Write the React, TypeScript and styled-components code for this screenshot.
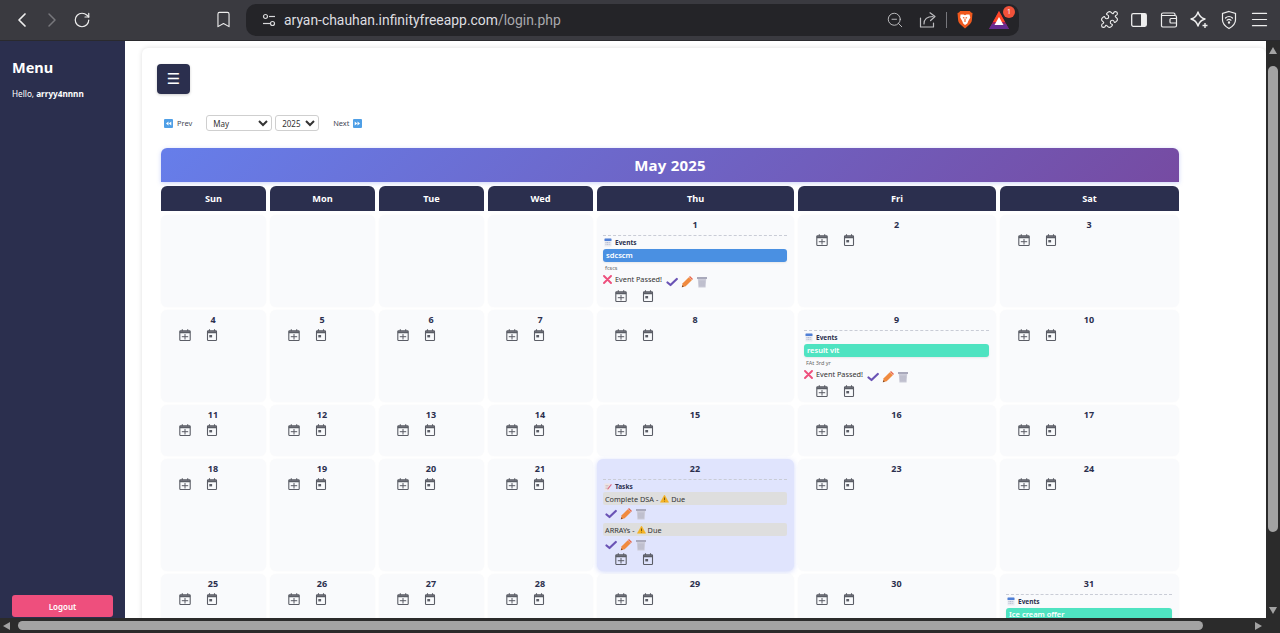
import React from "react";
import styled, { createGlobalStyle } from "styled-components";
import { ChevronLeft, ChevronRight, RotateCw, Bookmark, ZoomOut, Puzzle, Wallet, Menu as MenuIcon } from "lucide-react";

const Global = createGlobalStyle`
  html, body { margin: 0; padding: 0; height: 100%; overflow: hidden; background: #2b2b2b; }
  #root { height: 100%; }
  * { box-sizing: border-box; }
`;

const navy = "#2b2f4e";

const Shell = styled.div`
  width: 1280px; height: 633px; display: flex; flex-direction: column; overflow: hidden;
  font-family: "Noto Sans", "Open Sans", sans-serif;
`;
const Toolbar = styled.header`
  height: 41px; flex: none; background: #3a3a40; display: flex; align-items: center; padding: 0 6px 1px 7px;
  border-bottom: 1px solid #2a2a2e;
`;
const ToolButton = styled.div<{ $dim?: boolean; $w?: number; $ml?: number }>`
  width: ${p => p.$w ?? 30}px; height: 30px; flex: none; display: flex; align-items: center; justify-content: center;
  margin-left: ${p => p.$ml ?? 0}px;
  color: ${p => (p.$dim ? "#77777c" : "#eeeeee")};
`;
const BookmarkSlot = styled(ToolButton)`margin-left: 111px;`;
const UrlBar = styled.div`
  width: 773px; height: 32px; margin-left: 8px; flex: none; background: #242428; border-radius: 10px;
  display: flex; align-items: center; padding: 0 2px 0 15px; color: #d8d8da; position: relative;
`;
const SiteIcon = styled.div`width: 16px; height: 16px; flex: none; display: flex;`;
const UrlText = styled.div`
  margin-left: 7px; font-family: Roboto, "Noto Sans", sans-serif; font-size: 13.9px; color: #dedee0; white-space: nowrap;
`;
const UrlPath = styled.span`color: #a9a9ad;`;
const UrlEnd = styled.div`margin-left: auto; display: flex; align-items: center; color: #cfcfd2;`;
const UrlDivider = styled.div`width: 1px; height: 16px; background: #77777c; margin: 0 10px 0 9px;`;
const BatSlot = styled.div`width: 24px; height: 24px; margin-left: 14px; margin-right: 6px; position: relative; display: flex; align-items: center; justify-content: center;`;
const BatBadge = styled.span`
  position: absolute; top: -2px; right: -4px; width: 12px; height: 12px; border-radius: 50%; background: #f1523a; color: #fff;
  font-size: 7px; line-height: 12px; text-align: center;
`;
const RightTools = styled.div`display: flex; margin-left: 75px;`;

const Middle = styled.div`flex: 1; min-height: 0; display: flex;`;
const Viewport = styled.div`flex: 1; min-width: 0; display: flex; background: #fff; overflow: hidden;`;
const VTrack = styled.div`
  width: 14px; flex: none; background: #2b2b2b; display: flex; flex-direction: column; align-items: center;
`;
const ArrowUp = styled.div`
  margin-top: 6px; width: 0; height: 0; border-left: 4.5px solid transparent; border-right: 4.5px solid transparent; border-bottom: 7px solid #a3a3a3;
`;
const VThumb = styled.div`
  margin-top: 12px; width: 10px; height: 466px; background: #a3a3a3; border-radius: 5px;
`;
const ArrowDown = styled.div`
  margin-top: auto; margin-bottom: 4px; width: 0; height: 0; border-left: 4.5px solid transparent; border-right: 4.5px solid transparent; border-top: 7px solid #a3a3a3;
`;
const HTrack = styled.div`
  height: 15px; flex: none; background: #2b2b2b; display: flex; align-items: center; padding: 0 0 0 3px;
`;
const ArrowLeft = styled.div`
  width: 0; height: 0; border-top: 4.5px solid transparent; border-bottom: 4.5px solid transparent; border-right: 7px solid #a3a3a3;
`;
const HThumb = styled.div`margin-left: 8px; width: 1185px; height: 9px; background: #a3a3a3; border-radius: 5px;`;
const ArrowRight = styled.div`
  margin-left: 52px; width: 0; height: 0; border-top: 4.5px solid transparent; border-bottom: 4.5px solid transparent; border-left: 7px solid #a3a3a3;
`;

const Sidebar = styled.aside`
  width: 125px; flex: none; background: ${navy}; color: #fff; display: flex; flex-direction: column; padding: 16px 12px 1px;
`;
const SideTitle = styled.h2`margin: 0; font-size: 14.5px; line-height: 20px; font-weight: 700;`;
const Hello = styled.p`margin: 11px 0 0; font-size: 8.2px; line-height: 12px; strong { font-weight: 700; }`;
const Logout = styled.button`
  margin-top: auto; width: 101px; height: 22px; border: 0; border-radius: 3px; background: #ee4f7d; color: #fff;
  font: 600 8px "Noto Sans", sans-serif; padding: 0;
`;

const Content = styled.main`flex: 1; min-width: 0; padding: 7px 0 0 17px; overflow: hidden;`;
const Card = styled.section`
  background: #fff; border-radius: 6px; box-shadow: 0 0 5px rgba(0,0,0,0.13); padding: 16px 0 0 15px; height: 700px;
`;
const Hamburger = styled.button`
  display: block; width: 33px; height: 30px; border: 0; border-radius: 4px; background: ${navy}; color: #fff; font-size: 15px; padding: 0;
  font-family: "DejaVu Sans", sans-serif; box-shadow: 0 1px 3px rgba(0,0,0,.2);
`;
const MonthNav = styled.nav`
  display: flex; align-items: center; height: 16px; margin-top: 21px; font-size: 7.4px; color: #444756; padding-left: 7px;
`;
const NavLink = styled.span<{ $ml?: number }>`display: flex; align-items: center; gap: 4px; margin-left: ${p => p.$ml ?? 0}px;`;
const Select = styled.select<{ $w: number; $ml: number }>`
  width: ${p => p.$w}px; height: 16px; margin-left: ${p => p.$ml}px; border: 1px solid #cfcfcf; border-radius: 3px; background-color: #fff; color: #333;
  font: 8px "Noto Sans", sans-serif; padding: 0 0 0 2px;
`;
const Calendar = styled.div`width: 1018px; margin: 17px 0 0 4px;`;
const Banner = styled.div`
  height: 34px; border-radius: 6px 6px 0 0; background: linear-gradient(135deg, #667eea, #764ba2); color: #fff;
  display: flex; align-items: center; justify-content: center; font-size: 15px; font-weight: 700; box-shadow: 0 1px 4px rgba(102,126,234,.35); letter-spacing: .2px;
`;
const Grid = styled.div`
  margin-top: 4px; display: grid; grid-template-columns: 105px 105px 105px 105px 197px 198px 179px; column-gap: 4px; row-gap: 3px; align-items: stretch;
`;
const HeadCell = styled.div`
  height: 25px; margin-bottom: 1px; background: ${navy}; border-radius: 6px 6px 0 0; color: #fff; font-size: 9.2px; font-weight: 700;
  display: flex; align-items: center; justify-content: center;
`;
const Cell = styled.div<{ $today?: boolean }>`
  min-height: 51px; border-radius: 6px; background: ${p => (p.$today ? "#e0e4fd" : "#f9fafc")};
  padding: 4px 7px ${p => (p.$today ? 6 : 5)}px 6px;
  box-shadow: ${p => (p.$today ? "0 1px 5px rgba(102,126,234,.3)" : "0 0 2px rgba(0,0,0,.03)")};
  display: flex; flex-direction: column;
`;
const DayNum = styled.div`height: 12px; line-height: 12px; margin-bottom: 3px; text-align: center; font-size: 9px; font-weight: 700; color: ${navy};`;
const Section = styled.div`border-top: 1px dashed #c9ccd6; margin-top: 1px; padding-top: 1px;`;
const SectionLabel = styled.div`
  height: 10px; display: flex; align-items: center; gap: 3px; font-size: 6.5px; font-weight: 700; color: ${navy}; padding-left: 1px;
`;
const EventBar = styled.div<{ $color: string }>`
  margin-top: 2px; height: 13px; border-radius: 3px; background: ${p => p.$color}; color: #fff; font-size: 7.5px; font-weight: 600;
  line-height: 13px; padding-left: 3px; box-shadow: 0 1px 2px rgba(0,0,0,.08); white-space: nowrap; overflow: hidden;
`;
const Note = styled.div`margin-top: 2px; height: 9px; line-height: 9px; font-size: 5.5px; color: #666; padding-left: 2px;`;
const Passed = styled.div`height: 12px; margin-top: 1px; display: flex; align-items: center; font-size: 7.3px; color: #333; white-space: nowrap;`;
const PassedText = styled.span`margin: 0 4px 3px 3px;`;
const CrossSlot = styled.span`display: block; margin-bottom: 2px;`;
const Actions = styled.div`display: flex; gap: 3px; align-items: center; height: 12px;`;
const InlineActions = styled(Actions)`margin-top: 3px;`;
const TaskActions = styled(Actions)`margin: 3px 0 0 2px;`;
const TaskRow = styled.div`
  margin-top: 1px; height: 13px; background: #dedede; border-radius: 2px; font-size: 7.3px; color: #333; display: flex; align-items: center; gap: 2px;
  padding-left: 2px; white-space: nowrap;
  & ~ & { margin-top: 3px; }
`;
const Quick = styled.div<{ $tight?: boolean }>`
  display: flex; gap: 15px; height: 12px; margin-left: 12px; margin-top: ${p => (p.$tight ? 2 : 0)}px;
`;
const QuickAfterEvent = styled(Quick)`margin-top: 4px;`;

/* ---- drawings ---- */
const Svg = styled.svg`flex: none; display: block;`;
const SiteSvg = () => (
  <Svg width="16" height="16" viewBox="0 0 16 16" fill="none" stroke="#d8d8da" strokeWidth="1.2">
    <circle cx="4.5" cy="4.5" r="2" /><path d="M8 4.5h6" /><circle cx="11.5" cy="11.5" r="2" /><path d="M2 11.5h7" />
  </Svg>
);
const ShareSvg = () => (
  <Svg width="18" height="18" viewBox="0 0 18 18" fill="none" stroke="#bdbdc0" strokeWidth="1.2" strokeLinecap="round" strokeLinejoin="round">
    <path d="M1.5 7v9h13v-4" /><path d="M5 13c0-5 3-7.5 9-7.5" /><path d="M11 1.8l5 3.7-4.4 4" />
  </Svg>
);
const BraveSvg = () => (
  <Svg width="16" height="19" viewBox="0 0 16 19">
    <path d="M3.2 1h9.6l1.2 1.5 1.5.6-.6 7c-.3 2.2-1 3.3-2.4 4.4L8 18.5l-4.5-4C2.1 13.400 1.400 12.300 1.100 10.100L.5 3.100 2 2.500z" fill="#f0591e" />
    <path d="M3.500 4.500h3l1.500.7 1.500-.7h3l.8 3-2 3.500-1 2.500L8 15l-1.800-1.500-1-2.500-2-3.500z" fill="#fff" />
    <path d="M6 7.500l1.500.8M10 7.500l-1.500.8M8 9v3" stroke="#f0591e" strokeWidth="1.100" />
  </Svg>
);
const BatSvg = () => (
  <Svg width="22" height="20" viewBox="0 0 22 20">
    <path d="M11 1L1 19h20z" fill="#9e1f63" />
    <path d="M1 19h20l-3-5H4z" fill="#662d91" />
    <path d="M11 1l6 11H5z" fill="#ff4724" />
    <path d="M11 7l4.500 8h-9z" fill="#fff" />
  </Svg>
);
const PanelSvg = () => (
  <Svg width="18" height="18" viewBox="0 0 18 18">
    <rect x="1.700" y="2.700" width="14.600" height="12.600" rx="1.500" fill="none" stroke="#eee" strokeWidth="1.300" />
    <rect x="11" y="3" width="5" height="12" fill="#eee" />
  </Svg>
);
const WalletSvg = () => (
  <Svg width="18" height="18" viewBox="0 0 18 18" fill="none" stroke="#eee" strokeWidth="1.200" strokeLinejoin="round">
    <path d="M15 4V3.500A1.500 1.500 0 0 0 13.500 2H3a1.500 1.500 0 0 0-1.500 1.500V15A1.500 1.500 0 0 0 3 16h12a1.500 1.500 0 0 0 1.500-1.500V12" />
    <path d="M1.500 4.500H15a1.500 1.500 0 0 1 1.500 1.500v1.500" />
    <path d="M16.500 7.500H11a1 1 0 0 0-1 1V11a1 1 0 0 0 1 1h5.500z" />
  </Svg>
);
const SparkSvg = () => (
  <Svg width="20" height="20" viewBox="0 0 20 20" fill="none" stroke="#eee" strokeWidth="1.400" strokeLinejoin="round">
    <path d="M9 2c1 3.500 3 6 7 7-4 1-6 3.500-7 7-1-3.500-3-6-7-7 4-1 6-3.500 7-7z" />
    <path d="M16 13v5M13.500 15.500h5" />
  </Svg>
);
const ShieldSvg = () => (
  <Svg width="18" height="20" viewBox="0 0 18 20" fill="none" stroke="#eee" strokeWidth="1.200" strokeLinecap="round">
    <path d="M9 1.500l6.500 2V10c0 4-3 6.500-6.500 8.500C5.500 16.500 2.500 14 2.500 10V3.500z" />
    <path d="M5.500 8c2-1.800 5-1.800 7 0M7 10.200c1.200-1 2.800-1 4 0" /><circle cx="9" cy="12.500" r=".6" fill="#eee" />
  </Svg>
);

const CalPlus = () => (
  <Svg width="12" height="12" viewBox="0 0 12 12" fill="none" stroke="#5b5d66">
    <rect x=".8" y="1.800" width="10.400" height="9.700" rx=".8" strokeWidth="1.100" />
    <path d="M1 2.300h10V4H1z" fill="#5b5d66" strokeWidth=".5" />
    <path d="M3.300 .3V2.300M8.700 .3V2.300" strokeWidth="1.100" />
    <path d="M6 5v5.500M2.800 7.700h6.400" strokeWidth="1" />
  </Svg>
);
const CalDot = () => (
  <Svg width="12" height="12" viewBox="0 0 12 12" fill="none" stroke="#5b5d66">
    <rect x="1.500" y="1.800" width="9" height="9.700" rx=".8" strokeWidth="1.100" />
    <path d="M1.500 2.300h9V4h-9z" fill="#5b5d66" strokeWidth=".5" />
    <path d="M3.500 .3V2.300M8.500 .3V2.300" strokeWidth="1.100" />
    <rect x="3.300" y="6" width="2.800" height="2.400" fill="#5b5d66" stroke="none" />
  </Svg>
);
const EmojiCal = () => (
  <Svg width="8" height="9" viewBox="0 0 8 9">
    <rect x=".5" y=".5" width="7" height="8" rx=".6" fill="#e8eaf2" />
    <rect x=".5" y=".5" width="7" height="2.600" rx=".6" fill="#4f7fd6" />
    <path d="M1.500 4.500h5M1.500 6.300h5" stroke="#9aa3bd" strokeWidth=".7" strokeDasharray="1 .6" />
  </Svg>
);
const Memo = () => (
  <Svg width="8" height="9" viewBox="0 0 8 9">
    <rect x=".5" y="1.500" width="5.500" height="7" fill="#eee4e4" />
    <path d="M1.500 3.500h3M1.500 5h3M1.500 6.500h2" stroke="#b9a9ad" strokeWidth=".5" />
    <path d="M3.500 6.500L7 2l.8.7-3.500 4.500-1 .3z" fill="#d9657f" />
  </Svg>
);
const Skip = ({ dir }: { dir: "l" | "r" }) => (
  <Svg width="9" height="9" viewBox="0 0 9 9">
    <rect width="9" height="9" rx="1" fill="#4f9fe6" />
    <path d={dir === "l" ? "M4.500 2.500v4L2 4.500zM7.300 2.500v4L4.800 4.500z" : "M1.700 2.500v4l2.500-2zM4.500 2.500v4l2.500-2z"} fill="#fff" />
  </Svg>
);
const Cross = () => (
  <Svg width="9" height="9" viewBox="0 0 9 9"><path d="M1 1l7 7M8 1L1 8" stroke="#ee4f7d" strokeWidth="1.900" strokeLinecap="round" /></Svg>
);
const Check = () => (
  <Svg width="12" height="12" viewBox="0 0 12 12"><path d="M1.500 6.500L4.500 9 10.800 3" fill="none" stroke="#6a53b5" strokeWidth="2.200" strokeLinejoin="round" strokeLinecap="round" /></Svg>
);
const Pencil = () => (
  <Svg width="12" height="12" viewBox="0 0 12 12">
    <path d="M.8 11.200l.9-3.900L7.800 1.200l3 3-6.100 6.100z" fill="#f08a3f" />
    <path d="M8 1l1-1 3 3-1 1z" fill="#e8674a" />
    <path d="M.8 11.200l.5-2 1.500 1.500z" fill="#7a4a2a" />
  </Svg>
);
const Trash = () => (
  <Svg width="12" height="12" viewBox="0 0 12 12">
    <rect x="1" y="1" width="10" height="2" fill="#a9a9bb" />
    <path d="M1.800 3h8.400l-.6 8.500H2.400z" fill="#cbcbd8" />
    <path d="M4 4.500v6M6 4.500v6M8 4.500v6" stroke="#aeaec0" strokeWidth=".8" />
  </Svg>
);
const Warn = () => (
  <Svg width="9" height="9" viewBox="0 0 9 9">
    <path d="M4.500 1L8.600 8.300H.4z" fill="#f4b223" stroke="#f4b223" strokeWidth=".5" strokeLinejoin="round" />
    <path d="M4.500 3.500v2.500M4.500 6.800v.7" stroke="#5a4410" strokeWidth=".8" />
  </Svg>
);

/* ---- data ---- */
type Ev = { title: string; color: string; note: string };
type Day = { d?: number; ev?: Ev; tasks?: string[]; today?: boolean };
const teal = "#4fe3c1";
const blue = "#4a90e2";
const days: Day[] = [
  {}, {}, {}, {},
  { d: 1, ev: { title: "sdcscm", color: blue, note: "fcscs" } }, { d: 2 }, { d: 3 },
  { d: 4 }, { d: 5 }, { d: 6 }, { d: 7 }, { d: 8 },
  { d: 9, ev: { title: "result vit", color: teal, note: "FAt 3rd yr" } }, { d: 10 },
  { d: 11 }, { d: 12 }, { d: 13 }, { d: 14 }, { d: 15 }, { d: 16 }, { d: 17 },
  { d: 18 }, { d: 19 }, { d: 20 }, { d: 21 }, { d: 22, today: true, tasks: ["Complete DSA", "ARRAYs"] }, { d: 23 }, { d: 24 },
  { d: 25 }, { d: 26 }, { d: 27 }, { d: 28 }, { d: 29 }, { d: 30 },
  { d: 31, ev: { title: "Ice cream offer", color: teal, note: "" } },
];
const heads = ["Sun", "Mon", "Tue", "Wed", "Thu", "Fri", "Sat"];

const ActionIcons = () => (<><Check /><Pencil /><Trash /></>);

const DayCell = ({ day }: { day: Day }) => {
  if (!day.d) return <Cell />;
  return (
    <Cell $today={day.today}>
      <DayNum>{day.d}</DayNum>
      {day.ev && (
        <Section>
          <SectionLabel><EmojiCal />Events</SectionLabel>
          <EventBar $color={day.ev.color}>{day.ev.title}</EventBar>
          <Note>{day.ev.note}</Note>
          <Passed>
            <CrossSlot><Cross /></CrossSlot><PassedText>Event Passed!</PassedText>
            <InlineActions><ActionIcons /></InlineActions>
          </Passed>
        </Section>
      )}
      {day.tasks && (
        <Section>
          <SectionLabel><Memo />Tasks</SectionLabel>
          {day.tasks.map(t => (
            <React.Fragment key={t}>
              <TaskRow>{t} - <Warn /> Due</TaskRow>
              <TaskActions><ActionIcons /></TaskActions>
            </React.Fragment>
          ))}
        </Section>
      )}
      {day.ev ? <QuickAfterEvent><CalPlus /><CalDot /></QuickAfterEvent> : <Quick $tight={!!day.tasks}><CalPlus /><CalDot /></Quick>}
    </Cell>
  );
};

export default function App() {
  return (
    <Shell>
      <Global />
      <Toolbar>
        <ToolButton><ChevronLeft size={24} strokeWidth={1.7} /></ToolButton>
        <ToolButton $dim><ChevronRight size={24} strokeWidth={1.5} /></ToolButton>
        <ToolButton><RotateCw size={18} strokeWidth={1.6} /></ToolButton>
        <BookmarkSlot><Bookmark size={19} strokeWidth={1.4} /></BookmarkSlot>
        <UrlBar>
          <SiteIcon><SiteSvg /></SiteIcon>
          <UrlText>aryan-chauhan.infinityfreeapp.com<UrlPath>/login.php</UrlPath></UrlText>
          <UrlEnd>
            <ToolButton $w={20}><ZoomOut size={18} strokeWidth={1.2} color="#c8c8cb" /></ToolButton>
            <ToolButton $w={18} $ml={14}><ShareSvg /></ToolButton>
            <UrlDivider />
            <BraveSvg />
            <BatSlot><BatSvg /><BatBadge>1</BatBadge></BatSlot>
          </UrlEnd>
        </UrlBar>
        <RightTools>
          <ToolButton><Puzzle size={19} strokeWidth={1.4} /></ToolButton>
          <ToolButton><PanelSvg /></ToolButton>
          <ToolButton><WalletSvg /></ToolButton>
          <ToolButton><SparkSvg /></ToolButton>
          <ToolButton><ShieldSvg /></ToolButton>
          <ToolButton><MenuIcon size={21} strokeWidth={1.4} /></ToolButton>
        </RightTools>
      </Toolbar>
      <Middle>
        <Viewport>
          <Sidebar>
            <SideTitle>Menu</SideTitle>
            <Hello>Hello, <strong>arryy4nnnn</strong></Hello>
            <Logout>Logout</Logout>
          </Sidebar>
          <Content>
            <Card>
              <Hamburger>☰</Hamburger>
              <MonthNav>
                <NavLink><Skip dir="l" />Prev</NavLink>
                <Select $w={66} $ml={14} defaultValue="May"><option>May</option></Select>
                <Select $w={44} $ml={3} defaultValue="2025"><option>2025</option></Select>
                <NavLink $ml={14}>Next<Skip dir="r" /></NavLink>
              </MonthNav>
              <Calendar>
                <Banner>May 2025</Banner>
                <Grid>
                  {heads.map(h => <HeadCell key={h}>{h}</HeadCell>)}
                  {days.map((day, i) => <DayCell key={i} day={day} />)}
                </Grid>
              </Calendar>
            </Card>
          </Content>
        </Viewport>
        <VTrack><ArrowUp /><VThumb /><ArrowDown /></VTrack>
      </Middle>
      <HTrack><ArrowLeft /><HThumb /><ArrowRight /></HTrack>
    </Shell>
  );
}
